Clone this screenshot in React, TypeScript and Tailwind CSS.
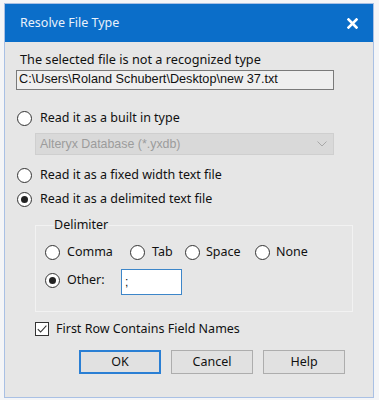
import React from "react";

const ui = { fontFamily: '"Noto Sans", "Open Sans", sans-serif' } as React.CSSProperties;
const arial = { fontFamily: '"Liberation Sans", Arial, sans-serif' } as React.CSSProperties;

function Radio({ checked }: { checked?: boolean }) {
  return (
    <div className="w-[15px] h-[15px] rounded-full border border-[#333333] bg-white flex items-center justify-center shrink-0">
      {checked && <div className="w-[7px] h-[7px] rounded-full bg-[#222222]" />}
    </div>
  );
}

function Btn({ label, primary }: { label: string; primary?: boolean }) {
  return (
    <div
      className={
        "w-[82px] h-[24px] flex items-center justify-center bg-[#e1e1e1] text-[12.5px] text-[#111] " +
        (primary ? "border-2 border-[#2a7fd4]" : "border border-[#adadad]")
      }
    >
      {label}
    </div>
  );
}

export default function App() {
  return (
    <div className="w-[379px] h-[400px] bg-[#f4f5f7] pt-[3px] pl-[4px]" style={ui}>
      <div className="w-[370px] h-[395px] border border-[#a9c0e4] bg-[#e6e6e6] flex flex-col">
        <div className="h-[38px] bg-[#0b6ec9] flex items-center justify-between pl-[15px] pr-[15px] shrink-0">
          <span className="text-[12.5px] text-[#e9f1fb] leading-none">Resolve File Type</span>
          <svg width="11" height="11" viewBox="0 0 11 11">
            <path d="M1.5 1.5 L9.5 9.5 M9.5 1.5 L1.5 9.5" stroke="#ffffff" strokeWidth="2.6" strokeLinecap="square" />
          </svg>
        </div>
        <div className="flex flex-col pl-[11px]">
          <div className="mt-[10px] h-[16px] flex items-center pl-[4px] text-[12.7px] text-[#111]">
            The selected file is not a recognized type
          </div>
          <div
            className="mt-[2px] w-[318px] h-[20px] border border-[#7a7a7a] bg-[#efefef] flex items-center pl-[2px] text-[12.7px] text-[#111]"
            style={arial}
          >
            C:\Users\Roland Schubert\Desktop\new 37.txt
          </div>
          <div className="mt-[20px] h-[16px] flex items-center gap-[8px] pl-[1px] text-[12.5px] text-[#111]">
            <Radio />
            <span>Read it as a built in type</span>
          </div>
          <div
            className="mt-[7px] ml-[19px] w-[299px] h-[22px] bg-[#d9d9d9] border border-[#cfcfcf] flex items-center justify-between pl-[4px] pr-[6px] text-[12.4px] text-[#9c9c9c]"
            style={arial}
          >
            <span>Alteryx Database (*.yxdb)</span>
            <svg width="10" height="6" viewBox="0 0 10 6">
              <path d="M0.5 0.5 L5 5 L9.5 0.5" stroke="#a8a8a8" strokeWidth="1" fill="none" />
            </svg>
          </div>
          <div className="mt-[12px] h-[16px] flex items-center gap-[8px] pl-[1px] text-[12.5px] text-[#111]">
            <Radio />
            <span>Read it as a fixed width text file</span>
          </div>
          <div className="mt-[8px] h-[16px] flex items-center gap-[8px] pl-[1px] text-[12.5px] text-[#111]">
            <Radio checked />
            <span>Read it as a delimited text file</span>
          </div>
          <fieldset className="mt-[10px] ml-[19px] w-[318px] border border-[#f2f2f2] pb-[16px] pl-[9px]">
            <legend className="ml-[9px] h-[16px] leading-[16px] text-[12.5px] text-[#111]">Delimiter</legend>
            <div className="mt-[11px] h-[16px] flex items-center text-[12.5px] text-[#111]">
              <div className="w-[85px] flex items-center gap-[7px]">
                <Radio />
                <span>Comma</span>
              </div>
              <div className="w-[55px] flex items-center gap-[7px]">
                <Radio />
                <span>Tab</span>
              </div>
              <div className="w-[70px] flex items-center gap-[6px]">
                <Radio />
                <span>Space</span>
              </div>
              <div className="flex items-center gap-[6px]">
                <Radio />
                <span>None</span>
              </div>
            </div>
            <div className="mt-[9px] h-[26px] flex items-start text-[12.5px] text-[#111]">
              <div className="mt-[3px] h-[16px] w-[76px] flex items-center gap-[7px]">
                <Radio checked />
                <span>Other:</span>
              </div>
              <div className="w-[61px] h-[26px] bg-white border border-[#3d86c9] flex items-center pl-[3px] text-[12px]" style={arial}>
                ;
              </div>
            </div>
          </fieldset>
          <div className="mt-[9px] ml-[19px] h-[16px] flex items-center gap-[7px] text-[12.5px] text-[#111]">
            <div className="w-[14px] h-[14px] border border-[#333333] bg-white flex items-center justify-center">
              <svg width="12" height="12" viewBox="0 0 12 12">
                <path d="M1.8 6.2 L4.6 9 L10.4 2.6" stroke="#333333" strokeWidth="1.1" fill="none" />
              </svg>
            </div>
            <span>First Row Contains Field Names</span>
          </div>
          <div className="mt-[13px] ml-[63px] flex gap-[10px]">
            <Btn label="OK" primary />
            <Btn label="Cancel" />
            <Btn label="Help" />
          </div>
        </div>
      </div>
    </div>
  );
}
